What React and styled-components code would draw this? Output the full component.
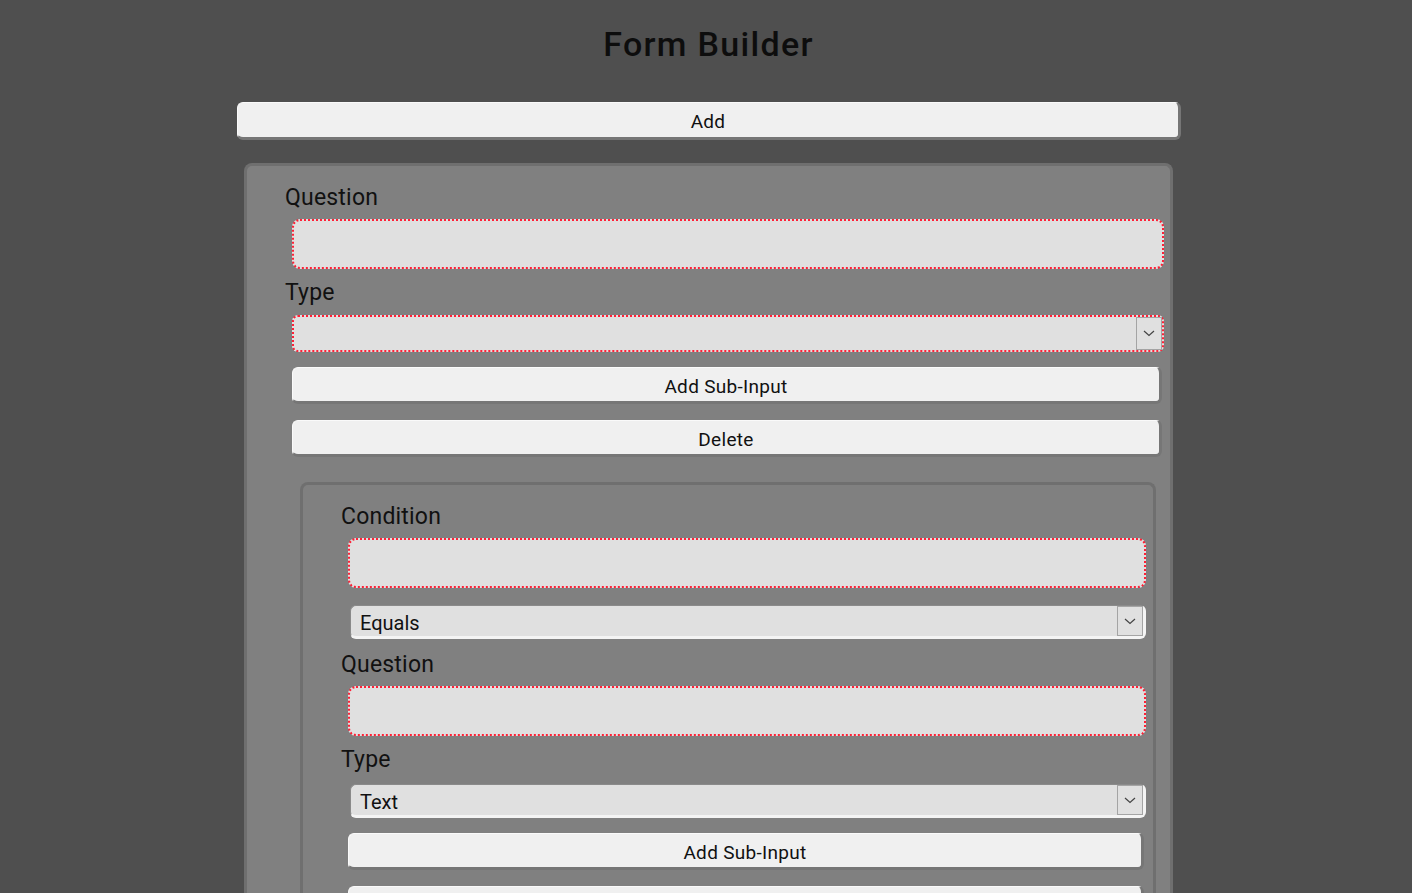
import React from 'react';
import styled, { createGlobalStyle } from 'styled-components';

const GlobalStyle = createGlobalStyle`
  body {
    margin: 0;
    background: #4f4f4f;
    font-family: Roboto, "Liberation Sans", sans-serif;
    color: #111;
  }
`;

const Page = styled.div`
  height: 893px;
  overflow: hidden;
`;

const Title = styled.h1`
  margin: 0;
  padding-top: 24px;
  line-height: 40px;
  font-size: 34px;
  font-weight: 500;
  letter-spacing: 1.3px;
  text-align: center;
  color: #0d0d0d;
  padding-left: 5px;
`;

const Content = styled.div`
  width: 944px;
  margin-left: calc(50% - 469px);
  margin-top: 38px;
`;

const Button = styled.div`
  box-sizing: border-box;
  height: ${({h}) => h || 37}px;
  width: ${({w}) => w}px;
  margin-left: ${({ml}) => ml || 0}px;
  margin-top: ${({mt}) => mt || 0}px;
  padding-top: 3px;
  background: #f0f0f0;
  border-radius: 6px;
  border-top: 1px solid #fafafa;
  border-left: 1px solid #fafafa;
  border-right: 3px solid #767676;
  border-bottom: 3px solid #767676;
  display: flex;
  align-items: center;
  justify-content: center;
  font-size: 19px;
  letter-spacing: 0.3px;
  color: #111;
`;

const Card = styled.div`
  box-sizing: border-box;
  width: ${({w}) => w}px;
  margin-left: ${({ml}) => ml}px;
  margin-top: ${({mt}) => mt}px;
  background: #808080;
  border: 3px solid #6f6f6f;
  border-bottom: none;
  border-radius: 8px 8px 0 0;
  padding-top: 19px;
  padding-bottom: 40px;
`;

const Label = styled.div`
  margin-left: 38px;
  margin-top: ${({mt}) => mt || 0}px;
  font-size: 23px;
  line-height: 26px;
  letter-spacing: 0.2px;
  color: #111;
`;

const Input = styled.div`
  box-sizing: border-box;
  width: ${({w}) => w}px;
  height: 50px;
  margin-left: 45px;
  margin-top: 8px;
  background: #e0e0e0;
  border: 2px dotted #ff2036;
  border-radius: 8px;
`;

const Select = styled.div`
  box-sizing: border-box;
  width: ${({w}) => w}px;
  height: ${({invalid}) => (invalid ? 37 : 34)}px;
  margin-left: ${({invalid}) => (invalid ? 45 : 47)}px;
  margin-top: ${({mt}) => mt || 0}px;
  background: #e0e0e0;
  border-radius: 6px;
  border: ${({invalid}) => (invalid ? '2px dotted #ff2036' : 'none')};
  ${({invalid}) => !invalid && `
    border-top: 1px solid #8a8a8a;
    border-left: 1px solid #8a8a8a;
    border-right: 3px solid #f4f4f4;
    border-bottom: 3px solid #f4f4f4;
  `}
  display: flex;
  align-items: center;
  padding-left: 9px;
  font-size: 20px;
  color: #111;
`;

const SelectText = styled.span`
  flex: 1;
  padding-top: 4px;
`;

const ArrowBox = styled.div`
  box-sizing: border-box;
  width: 26px;
  height: 100%;
  border: 1px solid #a4a4a4;
  display: flex;
  align-items: center;
  justify-content: center;
`;

const Chevron = () => (
  <svg width="12" height="7" viewBox="0 0 12 7">
    <path d="M1 1 L6 5.5 L11 1" fill="none" stroke="#444" strokeWidth="1.2" />
  </svg>
);

const SelectBox = ({value, ...rest}) => (
  <Select {...rest}>
    <SelectText>{value}</SelectText>
    <ArrowBox><Chevron /></ArrowBox>
  </Select>
);

export default function App() {
  return (
    <Page>
      <GlobalStyle />
      <Title>Form Builder</Title>
      <Content>
        <Button w={944} h={38}>Add</Button>
        <Card w={929} ml={7} mt={23}>
          <Label>Question</Label>
          <Input w={872} />
          <Label mt={11}>Type</Label>
          <SelectBox invalid w={872} mt={9} value="" />
          <Button w={870} ml={45} mt={15}>Add Sub-Input</Button>
          <Button w={870} ml={45} mt={16}>Delete</Button>
          <Card w={856} ml={53} mt={25}>
            <Label>Condition</Label>
            <Input w={798} />
            <SelectBox w={796} mt={17} value="Equals" />
            <Label mt={13}>Question</Label>
            <Input w={798} />
            <Label mt={11}>Type</Label>
            <SelectBox w={796} mt={11} value="Text" />
            <Button w={796} ml={45} mt={15}>Add Sub-Input</Button>
            <Button w={796} ml={45} mt={16}>Delete</Button>
          </Card>
        </Card>
      </Content>
    </Page>
  );
}
